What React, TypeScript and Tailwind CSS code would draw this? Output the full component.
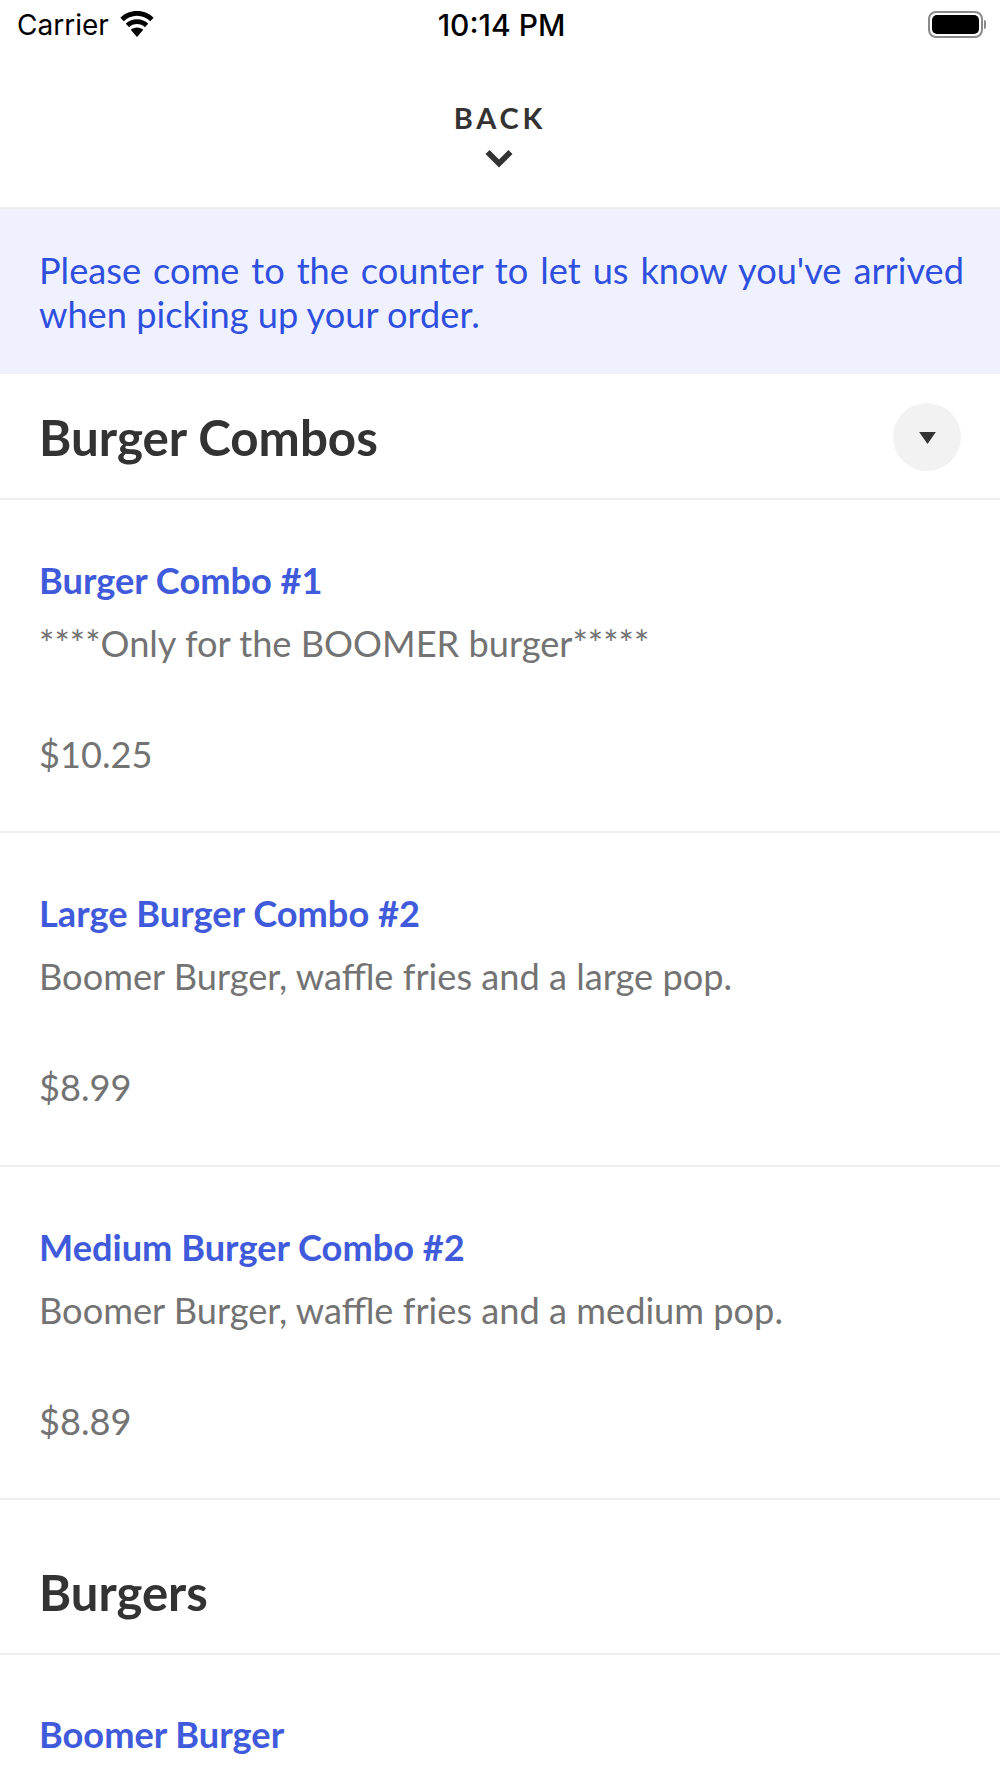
const lato = "font-['Lato',sans-serif]";

function Item({ title, desc, price }: { title: string; desc?: string; price?: string }) {
  return (
    <div className="border-b-2 border-[#eeeeee] pl-[39px] pr-10 pt-[58px] h-[333.33px]">
      <div className="text-[36.2px] leading-[44px] font-bold text-[#3f5bdc]">{title}</div>
      <div className="mt-[19px] text-[36.2px] leading-[44px] text-[#737373]">{desc}</div>
      <div className="mt-[67px] text-[36.2px] leading-[44px] text-[#737373]">{price}</div>
    </div>
  );
}

export default function App() {
  return (
    <div className={`${lato} w-[1000px] h-[1778px] overflow-hidden bg-white`}>
      <div className="flex items-center justify-between h-[50px] pl-[17px] pr-[14px] font-['Inter',sans-serif] text-black">
        <div className="flex items-center gap-[10px] w-[300px]">
          <span className="text-[28px] font-normal">Carrier</span>
          <svg width="36" height="28" viewBox="0 0 34 27" fill="black">
            <path d="M17 0C10.5 0 5 2.400 1 6.400l3.200 3.400C7.400 6.600 12 4.600 17 4.600s9.600 2 12.800 5.200L33 6.400C29 2.400 23.500 0 17 0z" />
            <path d="M17 8C12.600 8 9 9.600 6.200 12.200l3.200 3.400C11.400 13.800 14 12.600 17 12.600s5.600 1.200 7.600 3l3.200-3.400C25 9.600 21.400 8 17 8z" />
            <path d="M17 16c-2.400 0-4.400.9-6 2.200L17 25l6-6.800C21.400 16.900 19.400 16 17 16z" />
          </svg>
        </div>
        <span className="text-[30px] font-medium">10:14 PM</span>
        <div className="flex items-center justify-end w-[300px] pb-[2px]">
          <div className="flex h-[27px] w-[55px] items-center rounded-[8px] border-2 border-[#8a8a8a] p-[2px]">
            <div className="h-full w-full rounded-[5px] bg-black" />
          </div>
          <div className="ml-[1px] h-[9px] w-[2px] rounded-r-full bg-[#8a8a8a]" />
        </div>
      </div>

      <div className="flex h-[159px] flex-col items-center border-b-2 border-[#eeeeee] pt-[50px]">
        <span className="text-[29px] leading-[36px] font-bold tracking-[3.800px] text-[#333333]">BACK</span>
        <svg className="mt-[14px] mr-[3px]" width="28" height="18" viewBox="0 0 30 20" fill="#333333">
          <path d="M0 4.500 4.500 0 15 10.500 25.500 0 30 4.500 15 19.500z" />
        </svg>
      </div>

      <div className="h-[165px] bg-[#eff2fe] pl-[39px] pr-[36px] pt-[39px] text-[36.2px] leading-[44px] text-[#2f4fe0] text-justify">
        Please come to the counter to let us know you've arrived when picking up your order.
      </div>

      <div className="flex h-[126px] items-center justify-between border-b-2 border-[#eeeeee] pl-[39px] pr-[39px] pt-[2px]">
        <span className="mt-[2px] text-[49.3px] font-bold text-[#333333]">Burger Combos</span>
        <div className="flex h-[68px] w-[68px] items-center justify-center rounded-full bg-[#f2f2f2]">
          <svg className="mt-[3px]" width="17" height="13" viewBox="0 0 18 14" fill="#333333">
            <path d="M0 0h18L9 13z" />
          </svg>
        </div>
      </div>

      <Item title="Burger Combo #1" desc="****Only for the BOOMER burger*****" price="$10.25" />
      <Item title="Large Burger Combo #2" desc="Boomer Burger, waffle fries and a large pop." price="$8.99" />
      <Item title="Medium Burger Combo #2" desc="Boomer Burger, waffle fries and a medium pop." price="$8.89" />

      <div className="flex h-[155px] items-center border-b-2 border-[#eeeeee] pl-[39px] pt-[33px]">
        <span className="text-[49px] font-bold text-[#333333]">Burgers</span>
      </div>
      <div className="pl-[39px] pt-[57px] text-[36.2px] leading-[44px] font-bold text-[#3f5bdc]">Boomer Burger</div>
    </div>
  );
}
